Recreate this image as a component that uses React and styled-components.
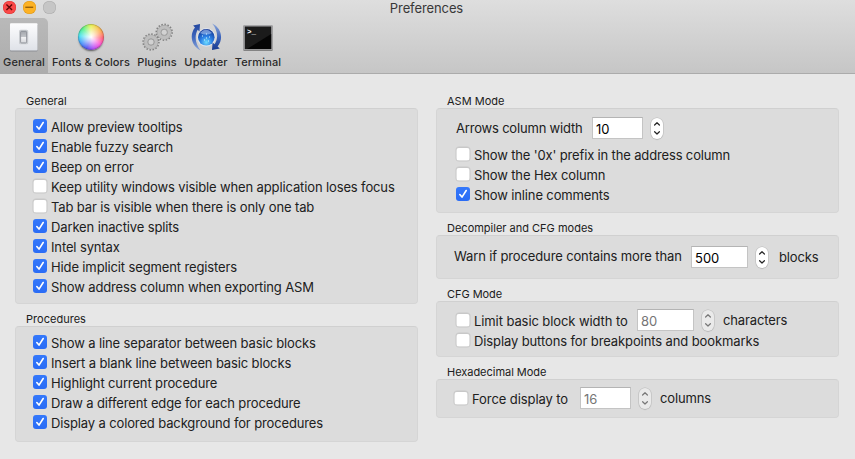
import React from "react";
import styled, { createGlobalStyle, css } from "styled-components";

const GlobalStyle = createGlobalStyle`
  * { box-sizing: border-box; }
  body {
    margin: 0;
    background: #e7e7e7;
    font-family: Inter, "Liberation Sans", sans-serif;
    color: #202020;
  }
`;

const Window = styled.main`
  width: 855px;
  height: 459px;
  display: flex;
  flex-direction: column;
  overflow: hidden;
  background: #e7e7e7;
`;

const Header = styled.header`
  height: 74px;
  flex: none;
  display: flex;
  flex-direction: column;
  background: linear-gradient(#dedede, #c6c6c6);
  border-bottom: 1px solid #ababab;
`;

const TitleBar = styled.div`
  height: 18px;
  display: grid;
  grid-template-columns: 56px 1fr 58px;
  align-items: start;
`;

const Lights = styled.div`
  display: flex;
  gap: 7.5px;
  padding: 1px 0 0 3px;
`;

const Light = styled.span`
  width: 12.5px;
  height: 12.5px;
  flex: none;
  display: flex;
  border-radius: 50%;
  background: ${(p) => p.$fill};
  box-shadow: inset 0 0 0 0.5px ${(p) => p.$edge};
  svg { width: 100%; height: 100%; }
`;

const Title = styled.h1`
  margin: 0;
  text-align: center;
  font-size: 13px;
  line-height: 16px;
  font-weight: 400;
  letter-spacing: -0.1px;
  color: #383838;
`;

const Toolbar = styled.nav`
  display: flex;
  height: 55px;
`;

const ToolItem = styled.div`
  width: ${(p) => p.$width}px;
  display: flex;
  flex-direction: column;
  align-items: center;
  padding-top: 3px;
  border-radius: 0 5px 0 0;
  background: ${(p) => (p.$active ? "linear-gradient(#b9b9b9, #acacac)" : "none")};
  svg { width: 32px; height: 32px; flex: none; }
`;

const ToolLabel = styled.span`
  font-size: 11px;
  line-height: 16px;
  margin-top: 1px;
  font-weight: 450;
  white-space: nowrap;
  letter-spacing: 0.13px;
  color: #2a2a2a;
`;

const Content = styled.div`
  display: grid;
  grid-template-columns: 403px 403px;
  column-gap: 18px;
  padding: 20px 0 0 15px;
`;

const Column = styled.div`
  display: flex;
  flex-direction: column;
  gap: 8px;
`;

const Section = styled.section`
  display: flex;
  flex-direction: column;
`;

const Legend = styled.h2`
  margin: 0;
  padding-left: 11px;
  height: 14px;
  font-size: 11px;
  line-height: 15px;
  font-weight: 400;
  letter-spacing: ${(p) => p.$track ?? 0.02}px;
`;

const Panel = styled.div`
  height: ${(p) => p.$height}px;
  padding: ${(p) => p.$pad};
  display: flex;
  flex-direction: column;
  background: #dcdcdc;
  border: 1px solid #d3d3d3;
  border-color: #d0d0d0 #d5d5d5 #d5d5d5;
  border-radius: 4px;
`;

const Row = styled.div`
  height: ${(p) => p.$height || 20}px;
  display: flex;
  align-items: center;
  flex: none;
`;

const Text = styled.span`
  font-size: 13px;
  line-height: 20px;
  white-space: nowrap;
  letter-spacing: ${(p) => p.$track ?? -0.13}px;
  width: ${(p) => (p.$width ? `${p.$width}px` : "auto")};
  padding-top: ${(p) => Math.max(p.$drop || 0, 0)}px;
  padding-bottom: ${(p) => Math.max(-p.$drop || 0, 0)}px;
`;

const Box = styled.span`
  width: 14px;
  height: 14px;
  margin-right: 4px;
  flex: none;
  display: flex;
  border-radius: 3px;
  ${(p) =>
    p.$on
      ? css`background: linear-gradient(#3478fb, #2a6cf5);`
      : css`
          background: #fff;
          box-shadow: inset 0 0 0 0.5px #c0c0c0, inset 0 1px 0 #d0d0d0, 0 0 0 0.5px #c8c8c8;
        `}
`;

const Field = styled.span`
  width: ${(p) => p.$width}px;
  height: 22px;
  flex: none;
  padding: 1px 0 0 3px;
  background: #fff;
  border: 1px solid #c4c4c4;
  border-top-color: #b4b4b4;
  font-size: 13px;
  line-height: 20px;
  letter-spacing: 0;
  color: ${(p) => (p.$off ? "#757575" : "#000")};
`;

const StepperShape = styled.span`
  width: 12px;
  height: 21px;
  margin: 0 ${(p) => p.$after || 0}px 0 ${(p) => p.$before || 9}px;
  flex: none;
  border-radius: 6px;
  background: ${(p) => (p.$off ? "#eaeaea" : "#fff")};
  box-shadow: 0 0 0 0.5px #bcbcbc, 0 0.5px 1px rgba(0, 0, 0, 0.3);
  svg { display: block; width: 12px; height: 21px; }
`;

function Stepper({ off, before, after }) {
  return (
    <StepperShape $off={off} $before={before} $after={after}>
      <svg viewBox="0 0 12 21" fill="none" stroke={off ? "#777" : "#222"} strokeWidth="1.2" strokeLinecap="round" strokeLinejoin="round">
        <path d="M3.6 7 6 4.7l2.4 2.3M3.6 13.7 6 16l2.4-2.3" />
      </svg>
    </StepperShape>
  );
}

function Check({ on }) {
  return (
    <Box $on={on}>
      {on && (
        <svg viewBox="0 0 14 14" width="14" height="14" fill="none" stroke="#fff" strokeWidth="1.6" strokeLinecap="round" strokeLinejoin="round">
          <path d="M3.8 7.5 6 10.1l4.2-6.6" />
        </svg>
      )}
    </Box>
  );
}

function Option({ on, track, height, children }) {
  return (
    <Row $height={height}>
      <Check on={on} />
      <Text $track={track} $drop={1}>{children}</Text>
    </Row>
  );
}

function SwitchIcon() {
  return (
    <svg viewBox="0 0 32 32">
      <defs>
        <linearGradient id="plate" x2="0" y2="1"><stop stopColor="#fdfdfe" /><stop offset="1" stopColor="#dfe2e8" /></linearGradient>
        <linearGradient id="toggle" x2="0" y2="1"><stop stopColor="#a3a6ac" /><stop offset=".45" stopColor="#c0c3c7" /><stop offset=".5" stopColor="#f3f3f5" /><stop offset="1" stopColor="#d5d7db" /></linearGradient>
      </defs>
      <rect x="2" y="3" width="27.5" height="27.4" rx="1" fill="#8d9096" />
      <rect x="2" y="2.2" width="27.5" height="27.3" rx="1" fill="url(#plate)" />
      <rect x="11" y="8.8" width="9.2" height="14.5" rx="1.6" fill="#c9ccd0" />
      <rect x="12.6" y="10.3" width="6" height="11.6" rx="1" fill="url(#toggle)" stroke="#858990" strokeWidth=".8" />
    </svg>
  );
}

const WheelFrame = styled.span`
  width: 32px;
  height: 32px;
  flex: none;
  display: flex;
  justify-content: center;
  padding-top: 3px;
`;

const Wheel = styled.span`
  width: 26px;
  height: 26px;
  border-radius: 50%;
  background:
    radial-gradient(circle, #fff 0, rgba(255, 255, 255, 0.7) 25%, rgba(255, 255, 255, 0.05) 72%),
    conic-gradient(#e5ef35, #ff9a35 60deg, #ff4560 95deg, #fb38d0 130deg, #b030f5 165deg, #3b39f0 200deg, #2688fa 240deg, #29dcee 275deg, #35ef75 315deg, #e5ef35 360deg);
  box-shadow: inset 0 0 1px 0.5px rgba(60, 60, 60, 0.5), 0 2px 2px -1px rgba(0, 0, 0, 0.6);
`;

function WheelIcon() {
  return <WheelFrame><Wheel /></WheelFrame>;
}

function Gear({ x, y }) {
  return (
    <g transform={`translate(${x} ${y})`}>
      <circle r="7.9" fill="none" stroke="#828282" strokeWidth="1.6" strokeDasharray="1.5 1.602" />
      <circle r="5.2" fill="none" stroke="#999" strokeWidth="4.2" />
      <circle r="5.2" fill="none" stroke="#bebebe" strokeWidth="3.4" />
      <circle r="3" fill="none" stroke="#999" strokeWidth=".7" />
      <circle r="1.9" fill="#d2d2d2" />
    </g>
  );
}

function GearsIcon() {
  return (
    <svg viewBox="0 0 32 32">
      <Gear x={10} y={21} />
      <Gear x={23.2} y={11.3} />
    </svg>
  );
}

function UpdaterIcon() {
  return (
    <svg viewBox="0 0 32 32">
      <defs>
        <radialGradient id="globe" cx=".5" cy=".8" r=".8"><stop stopColor="#70dcff" /><stop offset=".45" stopColor="#2b7fe4" /><stop offset="1" stopColor="#12328f" /></radialGradient>
        <linearGradient id="arrow" x2="0" y2="1"><stop stopColor="#23479f" /><stop offset=".5" stopColor="#3e66bd" /><stop offset="1" stopColor="#8ba6da" /></linearGradient>
        <linearGradient id="arrow2" x2="0" y2="1"><stop stopColor="#8ba6da" /><stop offset=".5" stopColor="#3e66bd" /><stop offset="1" stopColor="#17398f" /></linearGradient>
      </defs>
      <circle cx="16.3" cy="16.3" r="9.4" fill="#dfe4ec" />
      <circle cx="16.3" cy="16.3" r="8.3" fill="url(#globe)" />
      <path d="M10 12q6-7 12 0-6 3-12 0" fill="#b8d3fb" opacity=".55" />
      <path d="M12 15h1M16 13h1M19 16h1M14 19h1M18 20h1M16 17h1" stroke="#d4f5ff" strokeWidth="1.2" />
      <path d="M10.6 29.4C.8 24.8-.6 13.3 5 6.4L3.1 4.5 10 3 9.500 10.500 7.700 8.800C3.900 15.300 5.700 23.700 10.600 29.400Z" fill="url(#arrow)" />
      <path d="M22.200 2.500C32 7.200 33.500 18.600 27.600 25.500l2.200 2L22 29l.6-7.600 2 1.800C29.200 16.600 27 8.200 22.200 2.500Z" fill="url(#arrow2)" />
    </svg>
  );
}

const Prompt = styled.text`
  font: 700 7.5px "Liberation Mono", monospace;
`;

function TerminalIcon() {
  return (
    <svg viewBox="0 0 32 32">
      <rect x="1.3" y="4.5" width="29.4" height="25.5" rx="1" fill="#777" />
      <rect x="1.3" y="4" width="29.4" height="25.3" rx="1" fill="#a6a6a8" />
      <rect x="2.8" y="5.5" width="26.4" height="22.6" fill="#1b1b1b" />
      <path d="M29.2 13v15.1H5Z" fill="#050505" />
      <Prompt x="5" y="12.5" fill="#fff">&gt;_</Prompt>
    </svg>
  );
}

const tools = [
  { label: "General", width: 48, icon: <SwitchIcon />, active: true },
  { label: "Fonts & Colors", width: 86, icon: <WheelIcon /> },
  { label: "Plugins", width: 46, icon: <GearsIcon /> },
  { label: "Updater", width: 52, icon: <UpdaterIcon /> },
  { label: "Terminal", width: 52, icon: <TerminalIcon /> },
];

const general = [
  ["Allow preview tooltips", true],
  ["Enable fuzzy search", true],
  ["Beep on error", true],
  ["Keep utility windows visible when application loses focus", false],
  ["Tab bar is visible when there is only one tab", false],
  ["Darken inactive splits", true],
  ["Intel syntax", true],
  ["Hide implicit segment registers", true],
  ["Show address column when exporting ASM", true],
];

const procedures = [
  "Show a line separator between basic blocks",
  "Insert a blank line between basic blocks",
  "Highlight current procedure",
  "Draw a different edge for each procedure",
  "Display a colored background for procedures",
];

export default function App() {
  return (
    <Window>
      <GlobalStyle />
      <Header>
        <TitleBar>
          <Lights>
            <Light $fill="#fb4948" $edge="#dc3836">
              <svg viewBox="0 0 12 12" stroke="#5c0806" strokeWidth="1.3"><path d="m3.300 3.300 5.400 5.400M8.700 3.300 3.300 8.700" /></svg>
            </Light>
            <Light $fill="#fdb224" $edge="#dc9a20">
              <svg viewBox="0 0 12 12" stroke="#8a5606" strokeWidth="1.2"><path d="M2.200 6h7.600" /></svg>
            </Light>
            <Light $fill="#c6c6c6" $edge="#adadad" />
          </Lights>
          <Title>Preferences</Title>
        </TitleBar>
        <Toolbar>
          {tools.map((t) => (
            <ToolItem key={t.label} $width={t.width} $active={t.active}>
              {t.icon}
              <ToolLabel>{t.label}</ToolLabel>
            </ToolItem>
          ))}
        </Toolbar>
      </Header>
      <Content>
        <Column>
          <Section>
            <Legend>General</Legend>
            <Panel $height={196} $pad="7px 17px">
              {general.map(([label, on]) => <Option key={label} on={on}>{label}</Option>)}
            </Panel>
          </Section>
          <Section>
            <Legend>Procedures</Legend>
            <Panel $height={116} $pad="5px 17px">
              {procedures.map((label) => <Option key={label} on>{label}</Option>)}
            </Panel>
          </Section>
        </Column>
        <Column>
          <Section>
            <Legend>ASM Mode</Legend>
            <Panel $height={105} $pad="8px 19px">
              <Row $height={22}>
                <Text $width={136} $track={-0.19}>Arrows column width</Text>
                <Field $width={51}>10</Field>
                <Stepper before={8} />
              </Row>
              <Row $height={5} />
              <Option track={-0.15}>Show the '0x' prefix in the address column</Option>
              <Option>Show the Hex column</Option>
              <Option on>Show inline comments</Option>
            </Panel>
          </Section>
          <Section>
            <Legend $track={0}>Decompiler and CFG modes</Legend>
            <Panel $height={44} $pad="10px 17px">
              <Row $height={22}>
                <Text $width={237} $drop={-2}>Warn if procedure contains more than</Text>
                <Field $width={57}>500</Field>
                <Stepper before={8} after={11} />
                <Text $drop={0}>blocks</Text>
              </Row>
            </Panel>
          </Section>
          <Section>
            <Legend $track={-0.05}>CFG Mode</Legend>
            <Panel $height={56} $pad="7px 19px">
              <Row $height={22}>
                <Check />
                <Text $width={163} $drop={1} $track={-0.09}>Limit basic block width to</Text>
                <Field $width={57} $off>80</Field>
                <Stepper off before={8} after={9} />
                <Text $drop={0}>characters</Text>
              </Row>
              <Option height={18} track={-0.11}>Display buttons for breakpoints and bookmarks</Option>
            </Panel>
          </Section>
          <Section>
            <Legend $track={-0.03}>Hexadecimal Mode</Legend>
            <Panel $height={39} $pad="7px 17px">
              <Row $height={22}>
                <Check />
                <Text $width={108} $drop={1} $track={-0.08}>Force display to</Text>
                <Field $width={51} $off>16</Field>
                <Stepper off before={8} after={9} />
                <Text $drop={0}>columns</Text>
              </Row>
            </Panel>
          </Section>
        </Column>
      </Content>
    </Window>
  );
}
